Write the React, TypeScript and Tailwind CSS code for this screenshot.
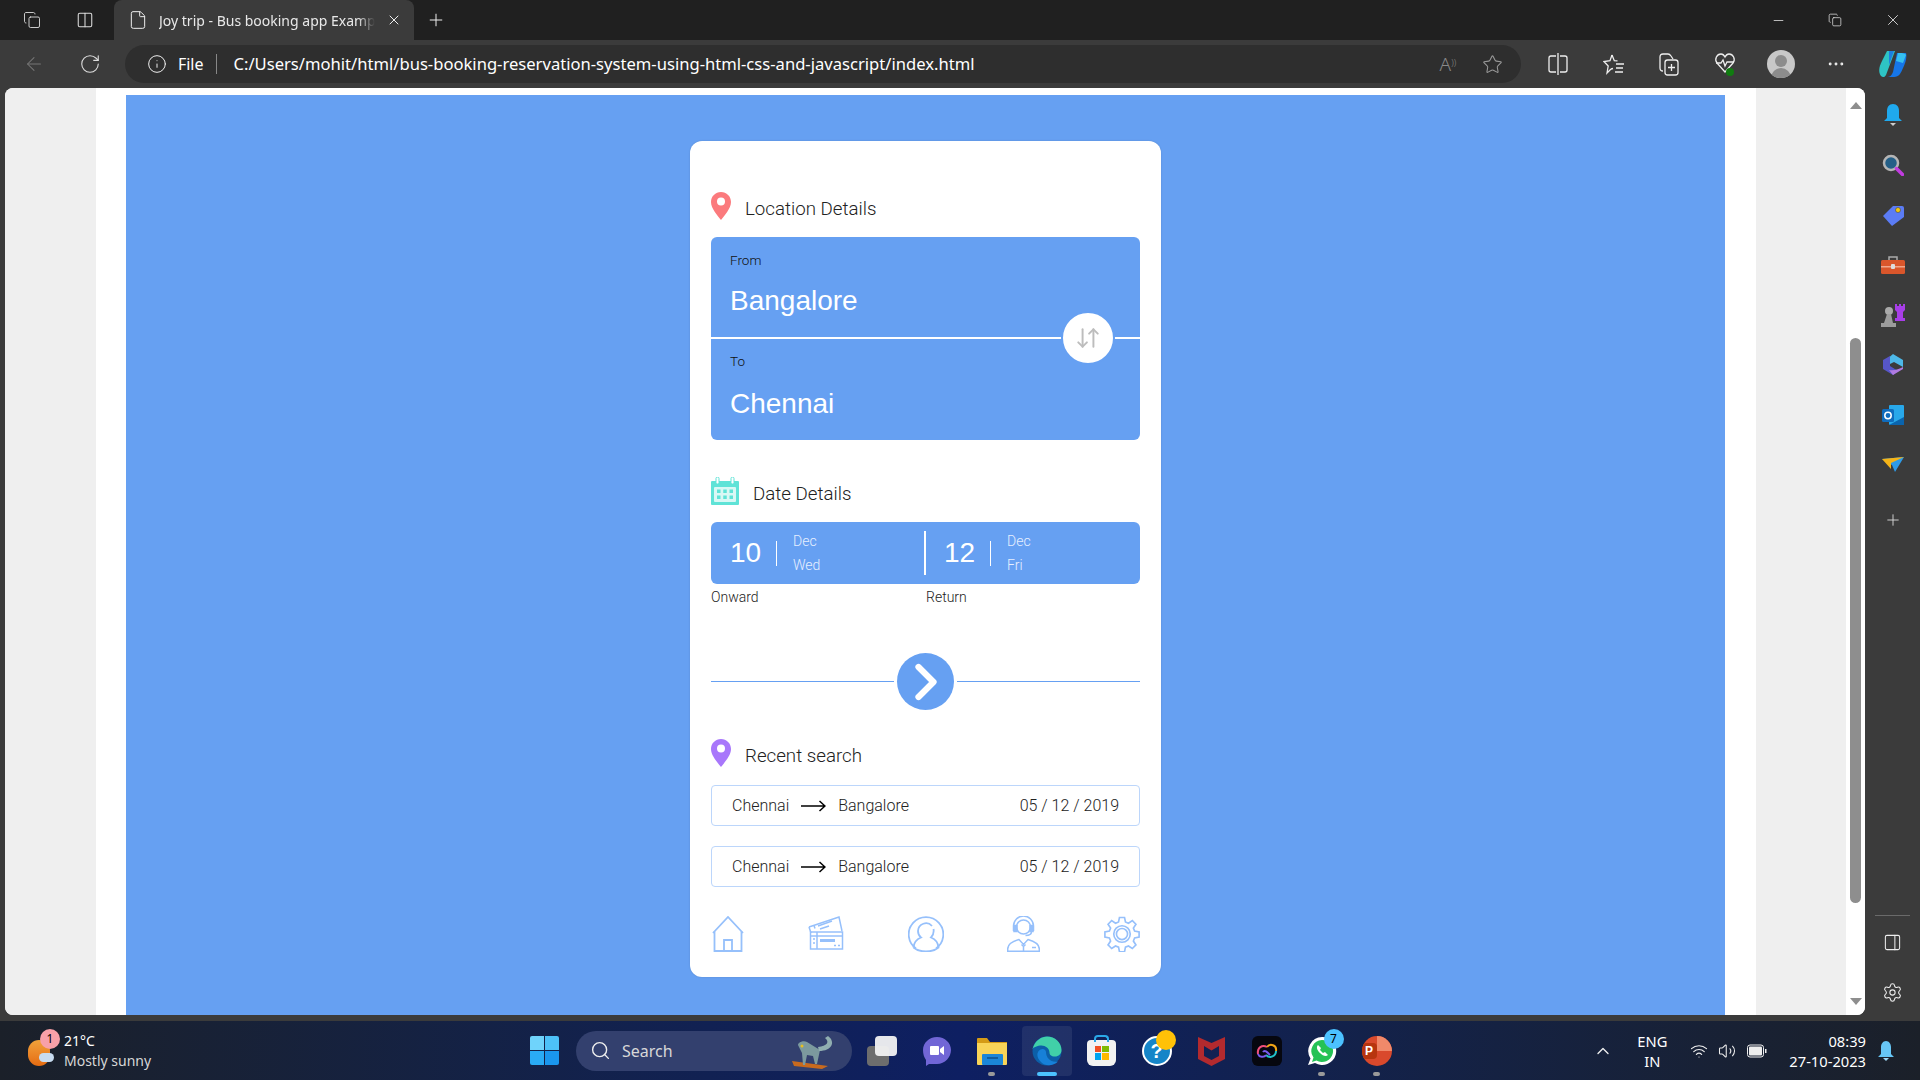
import type { ReactNode } from 'react'
import {
  ArrowLeft,
  ArrowDownUp,
  ChevronRight,
  ChevronUp,
  Columns2,
  Copy,
  Ellipsis,
  File,
  Info,
  Minus,
  PanelRight,
  Plus,
  RotateCw,
  Search,
  Settings,
  Star,
  Volume2,
  Wifi,
  X,
} from 'lucide-react'

const roboto = 'font-[Roboto,sans-serif]'
const arial = "font-['Liberation_Sans',Arial,sans-serif]"
const segoe = "font-['Noto_Sans',sans-serif]"

function MapPin({ color }: { color: string }) {
  return (
    <svg width="20" height="28" viewBox="0 0 20 28" className="shrink-0">
      <path d="M10 0C4.4 0 0 4.4 0 10c0 6.5 6.5 13.5 10 18 3.5-4.5 10-11.5 10-18C20 4.4 15.6 0 10 0z" fill={color} />
      <circle cx="10" cy="9.5" r="4" fill="#fff" />
    </svg>
  )
}

function CalendarIcon() {
  return (
    <svg width="28" height="28" viewBox="0 0 28 28" className="shrink-0">
      <path d="M1 4h26a1 1 0 0 1 1 1v22a1 1 0 0 1-1 1H1a1 1 0 0 1-1-1V5a1 1 0 0 1 1-1z" fill="#5fe3d7" />
      <rect x="5" y="0" width="3" height="7" rx="1.5" fill="#fff" stroke="#5fe3d7" />
      <rect x="20" y="0" width="3" height="7" rx="1.5" fill="#fff" stroke="#5fe3d7" />
      <rect x="3" y="10" width="22" height="15" rx="1" fill="#d9f8f5" />
      {[6, 12.25, 18.5].map((x) =>
        [12.5, 18.5].map((y) => <rect key={`${x}-${y}`} x={x} y={y} width="3.5" height="3.5" fill="#5fe3d7" />),
      )}
    </svg>
  )
}

function HomeIcon() {
  return (
    <svg width="32" height="36" viewBox="0 0 32 36" fill="none" stroke="#96c0fb" strokeWidth="1.8">
      <path d="M1 17 16 1l15 16" />
      <path d="M2.5 15.5V35h27V15.5" />
      <path d="M12 35V24h8v11" />
    </svg>
  )
}

function TicketIcon() {
  return (
    <svg width="36" height="34" viewBox="0 0 36 34" fill="none" stroke="#96c0fb" strokeWidth="1.5">
      <path d="M1 11 31 1l3 14" />
      <path d="M1 11l2 6M6 9.5l1 3" />
      <path d="M10 10l14-5M12 13l9-3" />
      <rect x="2.5" y="16" width="32" height="17" />
      <path d="M2.5 20h32M9 16v17" />
      <path d="M12 23h15v3H12z" fill="#96c0fb" stroke="none" />
      <path d="M26 29.5h2M30 29.5h2M5 23h2M5 27h2" />
    </svg>
  )
}

function UserIcon() {
  return (
    <svg width="36" height="36" viewBox="0 0 36 36" fill="none" stroke="#96c0fb" strokeWidth="1.8">
      <path d="M8 32.5a17.3 17.3 0 1 1 20 0" />
      <path d="M5.5 31.5c.5-6 5-9 7.5-10-2.200-1.700-3-4.500-3-6.500a8 8 0 0 1 14-5" />
      <path d="M25.500 13c.5 3-.5 6.500-2.500 8.500 2.500 1 7 4 7.500 10-3 2.500-7 4-12.500 4s-9.500-1.500-12.500-4" />
    </svg>
  )
}

function AgentIcon() {
  return (
    <svg width="33" height="36" viewBox="0 0 33 36" fill="none" stroke="#96c0fb" strokeWidth="1.5">
      <circle cx="16.5" cy="11" r="7" />
      <path d="M6.5 15V10a10 10 0 0 1 20 0v5" />
      <path d="M7 9.5h3v6H7zM23 9.5h3v6h-3z" fill="#96c0fb" />
      <path d="M24.5 15.5c0 2.500-2.500 4-6 4" />
      <path d="M.7 35.3V33c0-5 6-8 11.300-9.500l4.500 5 4.500-5c5.300 1.500 11.300 4.500 11.300 9.500v2.300z" />
      <path d="M14.5 28.5l2 2 2-2M16.5 30.5v4.800M25 31.500h4" />
    </svg>
  )
}

function GearIcon() {
  return (
    <svg width="36" height="36" viewBox="0 0 24 24" fill="none" stroke="#96c0fb" strokeWidth="1.1">
      <path d="M10.300 1h3.400l.6 3 2 .8 2.600-1.700 2.400 2.400-1.700 2.600.8 2 3 .6v3.400l-3 .6-.8 2 1.700 2.600-2.400 2.400-2.600-1.700-2 .8-.6 3h-3.400l-.6-3-2-.8-2.600 1.700-2.400-2.400 1.700-2.600-.8-2-3-.6v-3.400l3-.6.8-2-1.700-2.600 2.400-2.400 2.600 1.700 2-.8z" />
      <circle cx="12" cy="12" r="5.5" />
      <circle cx="12" cy="12" r="3.700" />
    </svg>
  )
}

function LongArrow() {
  return (
    <svg width="25" height="12" viewBox="0 0 25 12" fill="none" stroke="#000" strokeWidth="1.5" className="shrink-0">
      <path d="M0 6h24M18.500 1l5.500 5-5.500 5" />
    </svg>
  )
}

function SectionHeading({ icon, children }: { icon: ReactNode; children: ReactNode }) {
  return (
    <div className="flex h-[28px] items-center gap-[14px]">
      {icon}
      <span className={`${roboto} pt-[6px] text-[18.72px] font-light leading-none text-[#222]`}>{children}</span>
    </div>
  )
}

function CityField({ label, city, className, gap }: { label: string; city: string; className: string; gap: string }) {
  return (
    <div className={`flex flex-col pl-[19px] ${className}`}>
      <span className={`${roboto} text-[13.5px] font-light leading-[16px] text-[#111]`}>{label}</span>
      <span className={`${arial} ${gap} text-[28px] leading-[32px] text-white`}>{city}</span>
    </div>
  )
}

function DateCell({ day, month, weekday, className }: { day: string; month: string; weekday: string; className: string }) {
  return (
    <div className={`flex h-full items-center ${className}`}>
      <span className={`${arial} w-[46px] text-[28px] leading-none text-white`}>{day}</span>
      <span className="h-[25px] w-px bg-white" />
      <div className={`${roboto} ml-[16px] flex flex-col gap-[6px] text-[14px] font-light leading-[18px] text-[#e6efff]`}>
        <span>{month}</span>
        <span>{weekday}</span>
      </div>
    </div>
  )
}

function RecentRow() {
  return (
    <div className={`${roboto} flex h-[41px] items-center rounded border border-[#bcd6fb] px-[20px] text-[16px] font-light text-[#222]`}>
      <span>Chennai</span>
      <span className="mx-[12px]">
        <LongArrow />
      </span>
      <span>Bangalore</span>
      <span className="ml-auto">05 / 12 / 2019</span>
    </div>
  )
}

function BusCard() {
  return (
    <div className="mx-auto flex h-[836px] w-[471px] flex-col rounded-xl bg-white px-[21px] pt-[51px] shadow-[0_0_2px_rgba(0,0,0,0.15)]">
      <SectionHeading icon={<MapPin color="#fb7a7d" />}>Location Details</SectionHeading>

      <div className="relative mt-[17px] flex h-[203px] flex-col rounded-md bg-[#66a0f2]">
        <CityField label="From" city="Bangalore" gap="mt-[17px]" className="h-[100px] pt-[15px]" />
        <div className="h-[2px] bg-white" />
        <CityField label="To" city="Chennai" gap="mt-[19px]" className="flex-1 pt-[14px]" />
        <div className="absolute right-[25px] top-[74px] flex h-[54px] w-[54px] items-center justify-center rounded-full border-2 border-[#66a0f2] bg-white">
          <ArrowDownUp size={26} strokeWidth={1.8} color="#bdbdbd" />
        </div>
      </div>

      <div className="mt-[37px]">
        <SectionHeading icon={<CalendarIcon />}>Date Details</SectionHeading>
      </div>

      <div className="mt-[17px] flex h-[62px] items-center rounded-md bg-[#66a0f2]">
        <DateCell day="10" month="Dec" weekday="Wed" className="w-[213px] pl-[19px]" />
        <span className="h-[44px] w-[2px] bg-white" />
        <DateCell day="12" month="Dec" weekday="Fri" className="flex-1 pl-[18px]" />
      </div>
      <div className={`${roboto} mt-[4px] flex text-[14px] font-light leading-[18px] text-[#222]`}>
        <span className="w-[215px]">Onward</span>
        <span>Return</span>
      </div>

      <div className="mt-[47px] flex items-center gap-[3px]">
        <div className="h-px flex-1 bg-[#66a0f2]" />
        <div className="flex h-[57px] w-[57px] items-center justify-center rounded-full bg-[#66a0f2]">
          <ChevronRight size={60} strokeWidth={2.5} color="#fff" className="shrink-0" />
        </div>
        <div className="h-px flex-1 bg-[#66a0f2]" />
      </div>

      <div className="mt-[29px]">
        <SectionHeading icon={<MapPin color="#a877fb" />}>Recent search</SectionHeading>
      </div>

      <div className="mt-[18px] flex flex-col gap-[20px]">
        <RecentRow />
        <RecentRow />
      </div>

      <div className="mt-[29px] flex items-start justify-between pl-[1px]">
        <HomeIcon />
        <TicketIcon />
        <UserIcon />
        <AgentIcon />
        <GearIcon />
      </div>
    </div>
  )
}

function BrowserPage() {
  return (
    <div className="flex h-[927px] overflow-hidden rounded-lg bg-white">
      <div className="w-[91px] bg-[#efefef]" />
      <div className="flex-1 pl-[30px] pr-[31px] pt-[7px]">
        <div className="h-full bg-[#66a0f2] pt-[46px]">
          <BusCard />
        </div>
      </div>
      <div className="w-[90px] bg-[#efefef]" />
      <div className="flex w-[19px] flex-col items-center bg-white pt-[14px]">
        <div className="h-0 w-0 border-x-[6px] border-b-[7px] border-x-transparent border-b-[#8e8e8e]" />
        <div className="mt-[229px] h-[565px] w-[11px] rounded-full bg-[#8e8e8e]" />
        <div className="mt-[95px] h-0 w-0 border-x-[6px] border-t-[7px] border-x-transparent border-t-[#8e8e8e]" />
      </div>
    </div>
  )
}

function SideRail() {
  const tile = 'flex h-[28px] w-[28px] items-center justify-center'
  return (
    <div className="flex w-[55px] flex-col items-center bg-[#3b3b3b] pt-[13px]">
      <div className="flex flex-col items-center gap-[22px]">
        <div className={tile}>
          <svg width="18" height="22" viewBox="0 0 18 22">
            <path d="M9 0c4 0 6 3 6 7v7l3 3H0l3-3V7c0-4 2-7 6-7z" fill="#1fa9ee" />
            <path d="M6 19h6l-3 3z" fill="#ccc" />
          </svg>
        </div>
        <div className={tile}>
          <svg width="22" height="22" viewBox="0 0 22 22" fill="none">
            <circle cx="9" cy="9" r="7" fill="#245f87" stroke="#b5b5b5" strokeWidth="2.5" />
            <path d="m14.5 14.5 6 6" stroke="#c13ce0" strokeWidth="3.5" strokeLinecap="round" />
          </svg>
        </div>
        <div className={tile}>
          <svg width="22" height="22" viewBox="0 0 22 22">
            <path d="M11 2h9a2 2 0 0 1 2 2v9L10 22 1 12z" fill="#5b7cf5" />
            <circle cx="16" cy="6" r="2.5" fill="#f2c811" stroke="#333" strokeWidth="0.5" />
          </svg>
        </div>
        <div className={tile}>
          <svg width="24" height="18" viewBox="0 0 24 18">
            <path d="M8 4V1h8v3" fill="none" stroke="#aaa" strokeWidth="1.5" />
            <rect y="4" width="24" height="14" rx="1.5" fill="#d9562b" />
            <rect y="10" width="24" height="1.5" fill="#f0a58a" />
            <rect x="10" y="8" width="4" height="5" rx="1" fill="#ddd" />
          </svg>
        </div>
        <div className={tile}>
          <svg width="24" height="24" viewBox="0 0 24 24">
            <path d="M14 1h2v2h2V1h2v2h2V1h2v6l-2 2v6h2v3H14v-3h2V9l-2-2z" fill="#a83ee8" />
            <circle cx="8" cy="8" r="4" fill="#aaa" />
            <path d="M6 11h4l2 9h3v4H0v-4h3z" fill="#9c9c9c" />
          </svg>
        </div>
        <div className={tile}>
          <svg width="22" height="22" viewBox="0 0 22 22">
            <path d="M11 0 21 6v7l-9-5-8 4V6z" fill="#4db8e8" />
            <path d="M1 6l7-4v10l8 5-5 4-10-6z" fill="#5656c8" />
            <path d="M7 16c5 1 10-1 14-3v2l-10 6z" fill="#b07ae0" />
          </svg>
        </div>
        <div className={tile}>
          <svg width="22" height="22" viewBox="0 0 22 22">
            <rect x="7" y="1" width="15" height="20" rx="1" fill="#28a8ea" />
            <path d="M7 21l15-8v8z" fill="#0a64ad" />
            <rect y="5" width="12" height="13" rx="1.5" fill="#0f6cbd" />
            <circle cx="6" cy="11.5" r="3.2" fill="none" stroke="#fff" strokeWidth="1.5" />
          </svg>
        </div>
        <div className={tile}>
          <svg width="22" height="16" viewBox="0 0 22 16">
            <path d="M0 2 22 0 13 15l-3-7z" fill="#2e9be8" />
            <path d="M0 2 22 0 9 6v6z" fill="#f5b418" />
          </svg>
        </div>
        <div className={`${tile} mt-[5px]`}>
          <Plus size={18} strokeWidth={1.2} color="#ddd" />
        </div>
      </div>
      <div className="mt-auto flex flex-col items-center pb-[18px]">
        <div className="h-px w-[35px] bg-[#6a6a6a]" />
        <PanelRight size={19} strokeWidth={1.3} color="#eee" className="mt-[17px]" />
        <Settings size={21} strokeWidth={1.2} color="#eee" className="mt-[30px]" />
      </div>
    </div>
  )
}

function ToolbarCell({ children }: { children: ReactNode }) {
  return <div className="flex w-[55.7px] justify-center">{children}</div>
}

function TopChrome() {
  return (
    <>
      <div className={`${segoe} flex h-[40px] items-end bg-[#202020] text-white`}>
        <div className="flex h-full w-[114px] items-center gap-[35px] pl-[23px]">
          <Copy size={18} strokeWidth={1.2} color="#ddd" />
          <Columns2 size={18} strokeWidth={1.4} color="#ddd" />
        </div>
        <div className="flex h-[40px] w-[300px] items-center rounded-t-lg bg-[#3b3b3b] pl-[14px]">
          <File size={20} strokeWidth={1.2} color="#eee" />
          <span className="ml-[11px] w-[216px] overflow-hidden whitespace-nowrap text-[14px] text-[#e8e8e8] [mask-image:linear-gradient(to_right,#000_92%,transparent)]">
            Joy trip - Bus booking app Example
          </span>
          <X size={16} strokeWidth={1.5} className="ml-[11px]" color="#eee" />
        </div>
        <div className="flex h-full items-center pl-[12px]">
          <Plus size={20} strokeWidth={1.2} color="#eee" />
        </div>
        <div className="ml-auto flex h-full items-center gap-[42px] pr-[18px]">
          <Minus size={15} strokeWidth={1.2} color="#eee" />
          <Copy size={14} strokeWidth={1.2} color="#eee" />
          <X size={18} strokeWidth={1.1} color="#eee" />
        </div>
      </div>

      <div className="flex h-[48px] items-center bg-[#3b3b3b]">
        <div className="flex w-[125px] items-center gap-[34px] pl-[23px]">
          <ArrowLeft size={22} strokeWidth={1.1} color="#777" />
          <RotateCw size={22} strokeWidth={1.2} color="#ddd" />
        </div>
        <div className={`${segoe} flex h-[38px] w-[1398px] items-center rounded-full bg-[#2e2e2e] pl-[22px] pr-[18px] text-white`}>
          <Info size={20} strokeWidth={1.2} color="#eee" />
          <span className="ml-[11px] text-[16px]">File</span>
          <span className="ml-[13px] h-[20px] w-px bg-[#888]" />
          <span className="ml-[16px] whitespace-nowrap text-[16.6px]">C:/Users/mohit/html/bus-booking-reservation-system-using-html-css-and-javascript/index.html</span>
          <span className="ml-auto text-[19px] font-light text-[#8a8a8a]">
            A<sup className="text-[9px]">))</sup>
          </span>
          <Star size={21} strokeWidth={1.2} color="#999" className="ml-[26px]" />
        </div>
        <div className="flex flex-1 items-center pl-[9px]">
          <ToolbarCell>
            <svg width="20" height="22" viewBox="0 0 20 22" fill="none" stroke="#eee" strokeWidth="1.3">
              <path d="M8 3H3a2 2 0 0 0-2 2v12a2 2 0 0 0 2 2h5M12 3h5a2 2 0 0 1 2 2v12a2 2 0 0 1-2 2h-5M10 0v22" />
            </svg>
          </ToolbarCell>
          <ToolbarCell>
            <svg width="22" height="22" viewBox="0 0 22 22" fill="none" stroke="#eee" strokeWidth="1.3">
              <path d="M9 2l2.300 5.700 3.200.2M8 16l-4 4 1.200-7L1 8.500l6-.8L9 2M8 16l2 -.5" />
              <path d="M13 11h8M13 15h7M12 19h8" />
            </svg>
          </ToolbarCell>
          <ToolbarCell>
            <svg width="22" height="24" viewBox="0 0 22 24" fill="none" stroke="#eee" strokeWidth="1.3">
              <path d="M5 19c-2 0-3-1-3-3V5c0-2 1-3 3-3h5c1 0 2 .5 3 2l2 3" />
              <rect x="7" y="8" width="13" height="15" rx="2.500" />
              <path d="M13.500 12v7M10 15.500h7" />
            </svg>
          </ToolbarCell>
          <ToolbarCell>
            <svg width="22" height="24" viewBox="0 0 22 24" fill="none" stroke="#eee" strokeWidth="1.3">
              <path d="M11 20 3 11C0 7 3 2 7 2c2 0 3 1 4 3 1-2 2-3 4-3 4 0 7 5 4 9z" />
              <path d="M2 11h5l2-3 2 6 2-4h7" />
              <circle cx="16" cy="20" r="4" fill="#107c10" stroke="none" />
            </svg>
          </ToolbarCell>
          <ToolbarCell>
            <div className="relative h-[28px] w-[28px] overflow-hidden rounded-full bg-[#c8c8c8]">
              <div className="absolute left-[8px] top-[5px] h-[12px] w-[12px] rounded-full bg-[#8c8c8c]" />
              <div className="absolute left-[4px] top-[18px] h-[20px] w-[20px] rounded-full bg-[#8c8c8c]" />
            </div>
          </ToolbarCell>
          <ToolbarCell>
            <Ellipsis size={20} strokeWidth={1.5} color="#eee" />
          </ToolbarCell>
          <ToolbarCell>
            <svg width="30" height="30" viewBox="0 0 30 30">
              <path d="M10 2h8L9 26c-1 2-3 3-5 1-3-4-2-9 1-15z" fill="#2ec4c4" />
              <path d="M12 2h5l-5 14z" fill="#1d7fe0" />
              <path d="M20 4h9c1 3 0 9-3 15-2 5-4 9-9 9h-7c3 0 5-2 6-5z" fill="#1676e8" />
              <path d="M21 4c3 0 7 0 8 2l-3 8-7-2z" fill="#35c0f0" />
            </svg>
          </ToolbarCell>
        </div>
      </div>
    </>
  )
}

function TaskbarIcon({ children, dot, active }: { children: ReactNode; dot?: boolean; active?: boolean }) {
  return (
    <div className="relative flex h-[50px] w-[55px] items-center justify-center">
      {active && <div className="absolute inset-y-0 left-[2.5px] right-[2.5px] rounded bg-[#ffffff14]" />}
      <div className="relative">{children}</div>
      {dot && <span className="absolute bottom-[0px] h-[4px] w-[7px] rounded-full bg-[#9a9a9a]" />}
      {active && <span className="absolute bottom-[0px] h-[4px] w-[20px] rounded-full bg-[#4cc2ff]" />}
    </div>
  )
}

function Taskbar() {
  return (
    <div className={`${segoe} flex h-[59px] items-center bg-gradient-to-r from-[#1b2029] via-[#0e1f62] via-50% to-[#1b2029] text-white`}>
      <div className="flex w-[530px] items-center pl-[28px]">
        <div className="relative h-[28px] w-[28px]">
          <div className="absolute left-0 top-[3px] h-[26px] w-[22px] rounded-full bg-gradient-to-b from-[#f0a23a] to-[#e56b10]" />
          <div className="absolute left-[11px] top-[16px] h-[9px] w-[15px] rounded-full bg-[#c8dcf0]" />
          <div className="absolute left-[12px] top-[-8px] flex h-[20px] w-[20px] items-center justify-center rounded-full bg-[#f8a0a8] text-[12px] text-black">1</div>
        </div>
        <div className="ml-[8px] flex flex-col text-[14px] leading-[20px]">
          <span className="text-white">21°C</span>
          <span className="text-[#d6d6d6]">Mostly sunny</span>
        </div>
      </div>
      <div className="grid h-[29px] w-[29px] grid-cols-2 gap-[1px]">
        <span className="rounded-tl-[2px] bg-[#6fd3fb]" />
        <span className="rounded-tr-[2px] bg-[#4dc1f8]" />
        <span className="rounded-bl-[2px] bg-[#2aabf5]" />
        <span className="rounded-br-[2px] bg-[#1a96ee]" />
      </div>
      <div className="ml-[17px] flex h-[40px] w-[276px] items-center rounded-full bg-[#33406e] pl-[14px] text-[#d8d8d8]">
        <Search size={21} strokeWidth={1.6} color="#eee" />
        <span className="ml-[11px] text-[16px]">Search</span>
        <svg width="48" height="36" viewBox="0 0 48 36" className="ml-auto mr-[14px]">
          <path d="M2 28 38 33l-6 3L4 33z" fill="#c86a1e" />
          <path d="M8 12c0-3 6-5 9-3l13 8-3 14h-2l-2-8-6-1-2 10h-2l-1-12z" fill="#7c9a9e" />
          <circle cx="12" cy="13" r="1.5" fill="#e8c020" />
          <path d="M29 18C42 18 46 9 38 3l-3 2c5 4 2 8-7 9z" fill="#90aeb0" />
        </svg>
      </div>
      <div className="ml-[2px] flex items-center">
        <TaskbarIcon>
          <div className="relative h-[30px] w-[30px]">
            <div className="absolute bottom-0 left-0 h-[20px] w-[22px] rounded-sm bg-[#6d6d6d]" />
            <div className="absolute right-0 top-0 h-[20px] w-[22px] rounded-sm bg-[#f2f2f2] opacity-95" />
          </div>
        </TaskbarIcon>
        <TaskbarIcon>
          <svg width="28" height="30" viewBox="0 0 28 30">
            <path d="M14 1c8 0 14 6 14 13s-6 14-14 14H6l-3 2V24C1 21 0 18 0 14 0 7 6 1 14 1z" fill="#7166d6" />
            <path d="M8 10h7a1 1 0 0 1 1 1v7a1 1 0 0 1-1 1H8a1 1 0 0 1-1-1v-7a1 1 0 0 1 1-1zM17 13l4-3v9l-4-3z" fill="#fff" />
          </svg>
        </TaskbarIcon>
        <TaskbarIcon dot>
          <svg width="30" height="28" viewBox="0 0 30 28">
            <path d="M0 2a1 1 0 0 1 1-1h9l3 4h17v22H0z" fill="#d59b16" />
            <path d="M0 6h30v21a1 1 0 0 1-1 1H1a1 1 0 0 1-1-1z" fill="#f9d458" />
            <rect x="5" y="17" width="21" height="11" rx="1" fill="#1b86d8" />
            <path d="M10 21h11" stroke="#0c4f8c" strokeWidth="1.5" />
          </svg>
        </TaskbarIcon>
        <TaskbarIcon active>
          <svg width="30" height="30" viewBox="0 0 30 30">
            <circle cx="15" cy="15" r="14.5" fill="#0c5fa8" />
            <path d="M.5 13C3 4 10 .5 15 .5c8 0 14.500 6 14.500 13.500 0 4-3 6.500-6.500 6.500-4 0-5.500-2-5.500-4 0-4-4-7-8-7-4 0-8 2-9.500 3.500z" fill="#41d0a8" />
            <path d="M14 16c0 6 5 11 12 9.500-5 5-13 5-17 .5-4.500-4-5-10-.5-12.500 3-1.500 5.500 .5 5.500 2.500z" fill="#1780d8" />
          </svg>
        </TaskbarIcon>
        <TaskbarIcon>
          <div className="relative flex h-[26px] w-[29px] translate-y-[2px] items-center justify-center rounded-b-md rounded-t-sm bg-[#f2f2f2]">
            <div className="absolute left-[7px] top-[-5px] h-[7px] w-[15px] rounded-t-sm border-2 border-b-0 border-[#2aa8e8]" />
            <div className="grid h-[14px] w-[14px] grid-cols-2 gap-px">
              <span className="bg-[#f25022]" />
              <span className="bg-[#7fba00]" />
              <span className="bg-[#00a4ef]" />
              <span className="bg-[#ffb900]" />
            </div>
          </div>
        </TaskbarIcon>
        <TaskbarIcon>
          <div className={`${arial} relative flex h-[30px] w-[30px] items-center justify-center rounded-full border-2 border-white bg-[#1585c8] text-[20px] font-bold text-white`}>
            ?
            <span className="absolute right-[-6px] top-[-8px] h-[20px] w-[20px] rounded-full bg-[#ffc107]" />
          </div>
        </TaskbarIcon>
        <TaskbarIcon>
          <svg width="27" height="30" viewBox="0 0 27 30">
            <path d="M0 1l13.500 6L27 1v22l-13.500 7L0 23zM6 10v10l7.500 4 7.500-4V10l-7.500 4.500z" fill="#b32a2e" fillRule="evenodd" />
          </svg>
        </TaskbarIcon>
        <TaskbarIcon>
          <div className="flex h-[30px] w-[30px] items-center justify-center rounded-md bg-[#06070f]">
            <svg width="22" height="18" viewBox="0 0 22 18" fill="none" strokeWidth="2">
              <path d="M2 12C1 6 6 2 11 5" stroke="#ef4f7c" />
              <path d="M11 5c3-4 10-2 9 4" stroke="#f2a516" />
              <path d="M20 9c0 5-6 8-10 4" stroke="#21c1c9" />
              <path d="M10 13c-2 3-7 2-8-1M7 10c2-3 5 1 7 3" stroke="#7a5cf0" />
            </svg>
          </div>
        </TaskbarIcon>
        <TaskbarIcon dot>
          <svg width="30" height="30" viewBox="0 0 30 30">
            <path d="M15 1a14 14 0 1 1-7 26L1 29l2.500-6.500A14 14 0 0 1 15 1z" fill="#fff" />
            <path d="M15 4a11 11 0 1 1-5.500 20.500L5 26l1.500-4.500A11 11 0 0 1 15 4z" fill="#25c255" />
            <path d="M11 9c-2 2-1 5 2 8s6 4 8 2l-3-3-2 1-3-3 1-2z" fill="#fff" />
          </svg>
          <span className="absolute right-[-7px] top-[-7px] flex h-[20px] w-[20px] items-center justify-center rounded-full bg-[#4cc2ff] text-[12px] text-black">7</span>
        </TaskbarIcon>
        <TaskbarIcon dot>
          <div className="relative h-[30px] w-[30px] overflow-hidden rounded-full bg-[#d9492c]">
            <div className="absolute right-0 top-0 h-[15px] w-[15px] bg-[#f0896a]" />
            <div className={`${arial} absolute left-0 top-[7px] flex h-[16px] w-[15px] items-center justify-center rounded-sm bg-[#b7350f] text-[12px] font-bold text-white`}>P</div>
          </div>
        </TaskbarIcon>
      </div>
      <div className="ml-auto flex items-center pr-[25px] text-[14.7px]">
        <ChevronUp size={20} strokeWidth={1.6} color="#eee" />
        <div className="ml-[24px] flex flex-col items-center leading-[20px]">
          <span>ENG</span>
          <span>IN</span>
        </div>
        <Wifi size={18} strokeWidth={1.6} color="#eee" className="ml-[23px]" />
        <Volume2 size={18} strokeWidth={1.4} color="#eee" className="ml-[10px]" />
        <svg width="20" height="14" viewBox="0 0 20 14" fill="none" className="ml-[11px]">
          <rect x="0.5" y="1" width="16" height="12" rx="2.5" stroke="#eee" />
          <rect x="2" y="2.5" width="13" height="9" rx="1" fill="#eee" />
          <rect x="18" y="5" width="1.5" height="4" fill="#eee" />
        </svg>
        <div className="ml-[22px] flex flex-col items-end leading-[20px]">
          <span>08:39</span>
          <span>27-10-2023</span>
        </div>
        <svg width="18" height="20" viewBox="0 0 18 20" className="ml-[11px]">
          <path d="M9 0c3 0 5 3 5 6v7l3 3H1l3-3V6c0-3 2-6 5-6z" fill="#67c6f5" />
          <path d="M6 17h6l-3 3z" fill="#9fd8f5" />
        </svg>
      </div>
    </div>
  )
}

export default function App() {
  return (
    <div className="flex h-screen w-screen flex-col overflow-hidden bg-[#3b3b3b]">
      <TopChrome />
      <div className="flex h-[933px] pl-[5px]">
        <div className="h-full flex-1">
          <BrowserPage />
        </div>
        <SideRail />
      </div>
      <Taskbar />
    </div>
  )
}
